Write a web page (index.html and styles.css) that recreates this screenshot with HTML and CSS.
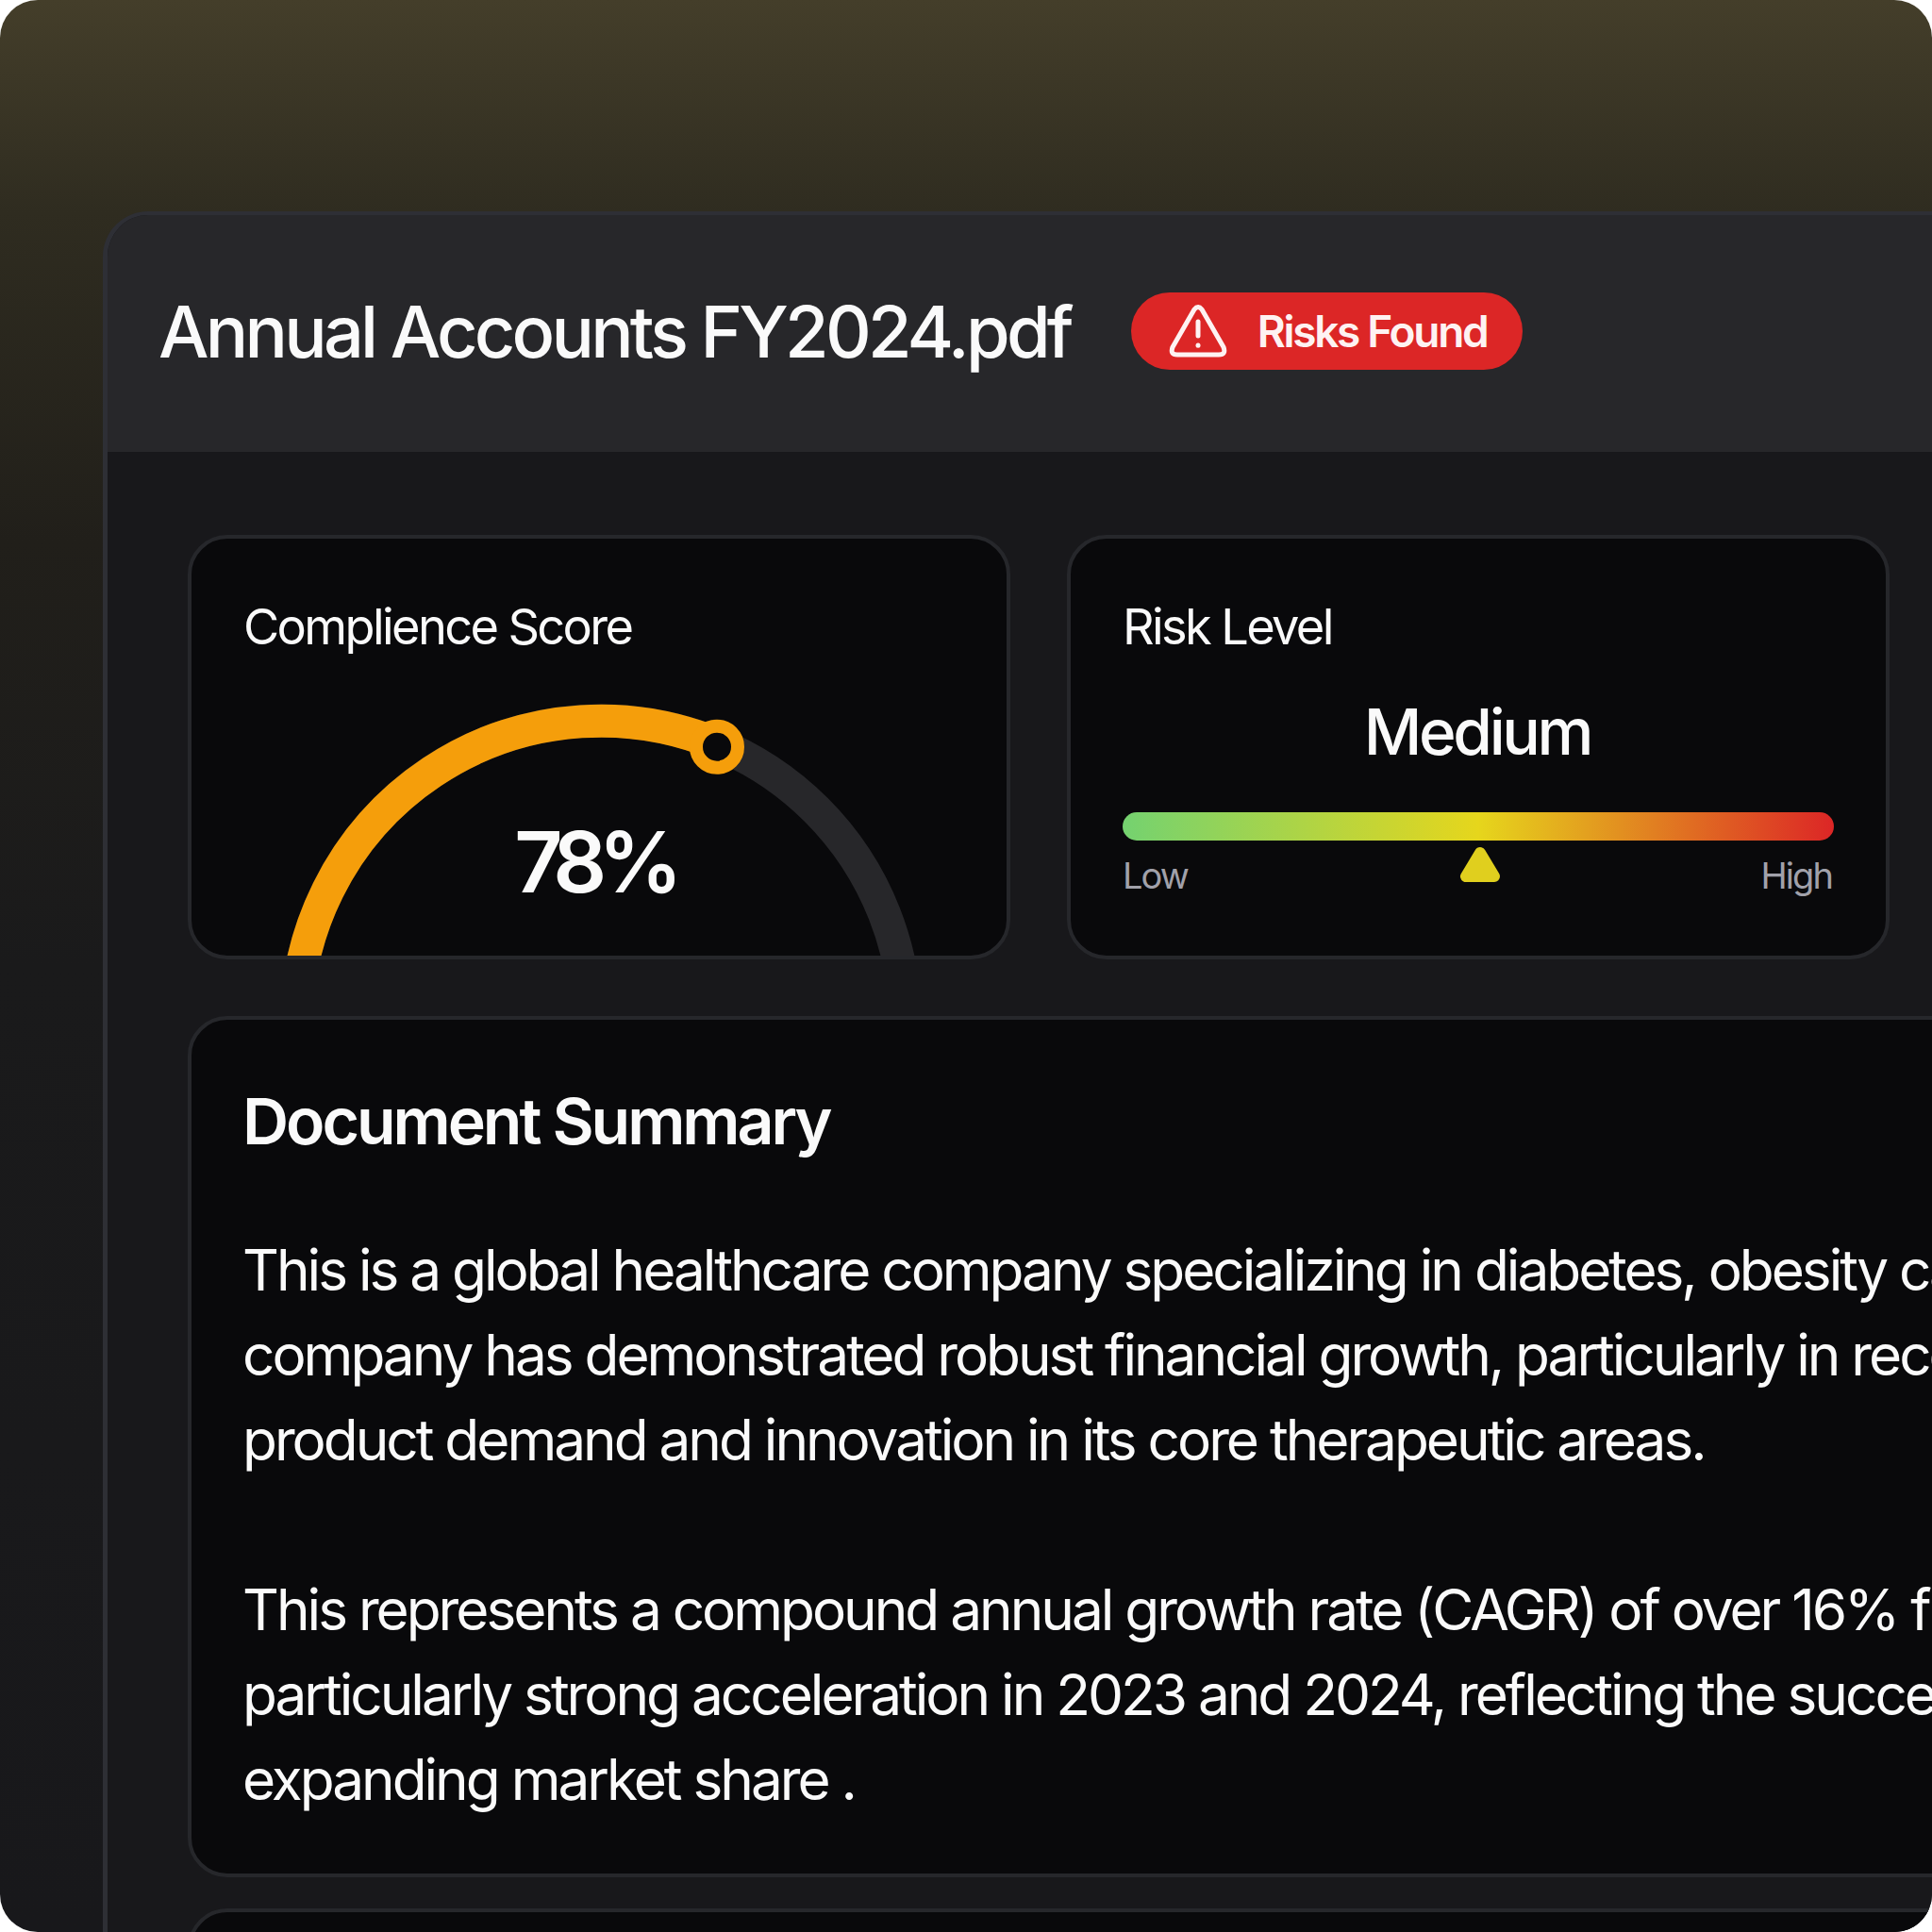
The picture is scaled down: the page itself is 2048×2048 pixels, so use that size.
FILE: index.html

```html
<!DOCTYPE html>
<html>
<head>
  <title>Annual Accounts FY2024.pdf</title>
  <link rel="stylesheet" href="styles.css">
</head>
<body>
  <div class="frame">
    <div class="window">
      <div class="window-header">
        <h1>Annual Accounts FY2024.pdf</h1>
        <div class="risk-badge">
          <svg class="risk-icon" viewBox="0 0 62 56" fill="none" stroke="#fef2f2" stroke-width="5" stroke-linecap="round" stroke-linejoin="round">
            <path d="M27 5 L4 45 Q1 53 9 53 H53 Q61 53 58 45 L35 5 Q31 0 27 5 Z"/>
            <path d="M31 18 V33"/>
            <path d="M31 43 V43.2"/>
          </svg>
          <span>Risks Found</span>
        </div>
      </div>
      <div class="window-body">
        <div class="score-row">
          <div class="card score-card">
            <div class="card-label">Complience Score</div>
            <svg class="gauge" viewBox="0 0 720 400" fill="none">
              <path d="M37 360 A323 323 0 0 1 683 360" stroke="#27272a" stroke-width="35"/>
              <path d="M37 360 A323 323 0 0 1 484.2 62" stroke="#f59e0b" stroke-width="35"/>
              <circle cx="483" cy="64.7" r="22" fill="#09090b" stroke="#f59e0b" stroke-width="14"/>
            </svg>
            <div class="gauge-value">78%</div>
          </div>
          <div class="card risk-card">
            <div class="card-label">Risk Level</div>
            <div class="risk-value">Medium</div>
            <div class="risk-bar"></div>
            <div class="risk-scale">
              <span>Low</span>
              <svg class="risk-marker" viewBox="0 0 42 38"><path d="M21 7 L6 32 H36 Z" fill="#e0cf1e" stroke="#e0cf1e" stroke-width="12" stroke-linejoin="round"/></svg>
              <span class="risk-high">High</span>
            </div>
          </div>
        </div>
        <div class="card summary-card">
          <h2>Document Summary</h2>
          <p>This is a global healthcare company specializing in diabetes, obesity care and rare diseases. The<br>company has demonstrated robust financial growth, particularly in recent years, driven by strong<br>product demand and innovation in its core therapeutic areas.</p>
          <p>This represents a compound annual growth rate (CAGR) of over 16% from 2020 to 2024, with<br>particularly strong acceleration in 2023 and 2024, reflecting the success of its new products and<br>expanding market share .</p>
        </div>
        <div class="card next-card"></div>
      </div>
    </div>
  </div>
</body>
</html>
```

FILE: styles.css

```css
html, body {
  margin: 0;
  background-color: #fff;
}

body {
  font-family: "Inter", sans-serif;
  color: #fafafa;
  width: 2048px;
  height: 2048px;
  overflow: hidden;
}

.frame {
  width: 2048px;
  height: 2048px;
  box-sizing: border-box;
  padding: 224px 0 0 109px;
  border-radius: 40px;
  overflow: hidden;
  background: linear-gradient(180deg, #443e2a 0%, #2f2c20 11%, #211f1a 28%, #1a1a1b 50%, #18181b 100%);
}

.window {
  width: 2300px;
  height: 2100px;
  box-sizing: border-box;
  border: solid #2e2f35;
  border-width: 4px 0 0 5px;
  border-radius: 48px 0 0 0;
  background-color: #18181b;
  overflow: hidden;
}

.window-header {
  height: 251px;
  box-sizing: border-box;
  padding: 0 0 5px 54px;
  display: flex;
  align-items: center;
  gap: 64px;
  background-color: #27272a;
}

.window-header h1 {
  margin: 0;
  font-size: 75.6px;
  font-weight: 500;
  letter-spacing: -0.05em;
}

.risk-badge {
  height: 82px;
  padding: 0 38px 0 40px;
  display: flex;
  align-items: center;
  gap: 32px;
  border-radius: 41px;
  background-color: #dc2626;
  color: #fef2f2;
  font-size: 46px;
  font-weight: 600;
  letter-spacing: -0.05em;
}

.risk-icon {
  width: 62px;
  height: 56px;
}

.window-body {
  padding: 88px 0 0 85px;
}

.score-row {
  display: flex;
  gap: 60px;
}

.card {
  box-sizing: border-box;
  border: 4px solid #26272b;
  border-radius: 42px;
  background-color: #09090b;
  overflow: hidden;
}

.score-card, .risk-card {
  position: relative;
  width: 872px;
  height: 450px;
  padding: 63px 55px 0;
}

.card-label {
  font-size: 52.3px;
  line-height: 60px;
  letter-spacing: -0.05em;
}

.gauge {
  position: absolute;
  left: 74px;
  top: 156px;
  width: 720px;
  height: 400px;
}

.gauge-value {
  position: absolute;
  left: 0;
  right: 10px;
  top: 288px;
  text-align: center;
  font-size: 89px;
  font-weight: 600;
  line-height: 110px;
  letter-spacing: -0.1em;
}

.risk-value {
  margin-top: 42px;
  padding-right: 2px;
  text-align: center;
  font-size: 67.5px;
  font-weight: 500;
  line-height: 80px;
  letter-spacing: -0.05em;
}

.risk-bar {
  height: 30px;
  margin-top: 45px;
  border-radius: 15px;
  background: linear-gradient(90deg, #74d270 0%, #e6d61c 50%, #dc2626 100%);
}

.risk-scale {
  display: grid;
  grid-template-columns: 1fr auto 1fr;
  align-items: start;
  margin-top: 6px;
  font-size: 38px;
  line-height: 62px;
  letter-spacing: -0.05em;
  color: #a1a1aa;
}

.risk-high {
  justify-self: end;
  padding-right: 2px;
}

.risk-marker {
  width: 42px;
  height: 38px;
  margin-left: 4px;
}

.summary-card {
  width: 2300px;
  height: 913px;
  margin-top: 60px;
  padding: 67px 54px;
}

.summary-card h2 {
  margin: 0;
  font-size: 68px;
  font-weight: 600;
  line-height: 80px;
  letter-spacing: -0.045em;
}

.summary-card p {
  margin: 0 0 90px;
  font-size: 60.3px;
  line-height: 90px;
  letter-spacing: -0.05em;
  white-space: nowrap;
}

.summary-card h2 + p {
  margin-top: 74px;
}

.next-card {
  width: 2300px;
  height: 200px;
  margin-top: 33px;
}
```
